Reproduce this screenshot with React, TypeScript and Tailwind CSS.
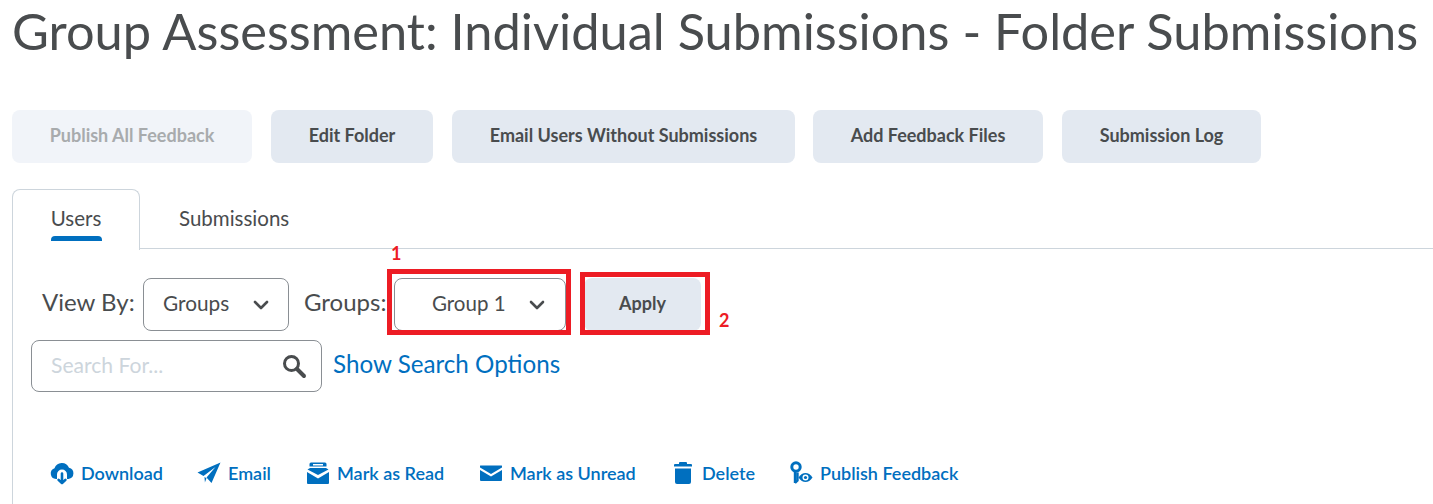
import React from "react";

const Chevron = () => (
  <svg width="16" height="10" viewBox="0 0 16 10" fill="none" stroke="#494c4e" strokeWidth="2.6" strokeLinecap="round" strokeLinejoin="round">
    <path d="M2 2l6 6 6-6" />
  </svg>
);

const blue = "#006fbf";

const IconDownload = () => (
  <svg width="24" height="24" viewBox="0 0 24 24">
    <path fill={blue} d="M6 18a5.500 5.500 0 0 1-1.500-10.700A7.800 7.800 0 0 1 19 6.800 5.700 5.700 0 0 1 18.500 18z" />
    <circle cx="12" cy="13.500" r="5" fill="#fff" />
    <rect x="7" y="13.500" width="10" height="5" fill="#fff" />
    <path fill="none" stroke={blue} strokeWidth="2.600" strokeLinecap="round" strokeLinejoin="round" d="M12 12.500v9.500M8.600 18.800l3.400 3.400 3.400-3.400" />
  </svg>
);
const IconEmail = () => (
  <svg width="24" height="24" viewBox="0 0 24 24">
    <path fill={blue} d="M23.500 1.500 0.500 11.500l6 3.600L18.500 6 9.500 16.600l5 5.400z" />
    <path fill={blue} d="M7.500 16l2 1.200-1.600 4.200z" />
  </svg>
);
const IconRead = () => (
  <svg width="24" height="24" viewBox="0 0 24 24">
    <path fill={blue} d="M5 1.500h14a1.500 1.500 0 0 1 1.500 1.500v2.500H3.500V3A1.500 1.500 0 0 1 5 1.500z" />
    <path fill={blue} d="M1.500 8.500 4 7h16l2.500 1.500L12 14z" />
    <path fill={blue} d="M1 11l11 6.500L23 11v11a1 1 0 0 1-1 1H2a1 1 0 0 1-1-1z" />
    <rect x="7" y="3" width="10" height="1.500" fill="#fff" />
  </svg>
);
const IconUnread = () => (
  <svg width="24" height="24" viewBox="0 0 24 24">
    <path fill={blue} d="M1.500 4.500h21a1 1 0 0 1 .5.200v1.800L12 13 1 6.500V4.700a1 1 0 0 1 .5-.2z" />
    <path fill={blue} d="M1 9l11 6.500L23 9v10a1 1 0 0 1-1 1H2a1 1 0 0 1-1-1z" />
  </svg>
);
const IconDelete = () => (
  <svg width="24" height="24" viewBox="0 0 24 24">
    <path fill={blue} d="M9 1h6a1 1 0 0 1 1 1v1h4a1 1 0 0 1 1 1v1.500H3V4a1 1 0 0 1 1-1h4V2a1 1 0 0 1 1-1z" />
    <path fill={blue} d="M4 7.500h16V21a2 2 0 0 1-2 2H6a2 2 0 0 1-2-2z" />
  </svg>
);
const IconPublish = () => (
  <svg width="24" height="24" viewBox="0 0 24 24">
    <circle cx="7" cy="6" r="4.200" fill="none" stroke={blue} strokeWidth="3" />
    <path fill="none" stroke={blue} strokeWidth="2.400" d="M6 10.500V22M6 22l2.500-2.500v-8" />
    <path fill={blue} d="M9.500 16.500c2-3.300 4.500-4.500 7-4.500s5 1.200 7 4.500c-2 3.300-4.500 4.500-7 4.500s-5-1.200-7-4.500z" />
    <circle cx="16.500" cy="16.500" r="3" fill="#fff" />
    <circle cx="16.500" cy="16.500" r="1.600" fill={blue} />
  </svg>
);

const btn = "h-[53px] rounded-lg bg-[#e3e9f1] text-[18px] font-bold text-[#494c4e] flex items-center justify-center pb-[2px]";

const Action = ({ icon, label, w }: { icon: React.ReactNode; label: string; w: string }) => (
  <div className={`flex items-center gap-[7px] text-[18px] font-semibold text-[#006fbf] ${w}`}>
    {icon}
    <span>{label}</span>
  </div>
);

export default function App() {
  return (
    <div className="relative w-[1433px] h-[504px] overflow-hidden bg-white pl-3 font-['Lato','Liberation_Sans',sans-serif] text-[#494c4e]">
      <h1 className="h-[110px] pt-[2px] text-[50.560px] leading-[58px] font-normal whitespace-nowrap">
        Group Assessment: Individual Submissions - Folder Submissions
      </h1>

      <div className="flex gap-[19px]">
        <div className={`${btn} w-[240px] bg-[#f1f4f9] text-[#a8abad]`}>Publish All Feedback</div>
        <div className={`${btn} w-[162px]`}>Edit Folder</div>
        <div className={`${btn} w-[343px]`}>Email Users Without Submissions</div>
        <div className={`${btn} w-[230px] ml-[-1px]`}>Add Feedback Files</div>
        <div className={`${btn} w-[199px]`}>Submission Log</div>
      </div>

      <div className="mt-[26px] flex h-[60px]">
        <div className="w-[128px] h-[61px] rounded-t-lg border border-b-0 border-[#cdd5dc] bg-white flex justify-center relative z-10">
          <div className="relative h-[59px] w-[51px] flex justify-center pt-[16px] text-[20.500px] leading-[24px]">
            Users
            <div className="absolute left-0 bottom-[8px] w-[51px] h-[5px] rounded-t-[4px] bg-[#006fbf]" />
          </div>
        </div>
        <div className="flex-1 border-b border-[#cdd5dc] pl-[39px] pt-[17px] text-[20.500px] leading-[24px]">Submissions</div>
      </div>

      <div className="border-l border-[#cdd5dc] h-[255px] pl-[18px] pt-[29px]">
        <div className="flex items-center h-[53px] text-[24px]">
          <span className="ml-[11px] w-[101px] -mt-[5px]">View By:</span>
          <div className="w-[146px] h-[53px] rounded-lg border border-[#8a8f94] flex items-center justify-between pl-[19px] pr-[19px] text-[20.800px]">
            <span className="-mt-[3px]">Groups</span>
            <Chevron />
          </div>
          <span className="ml-[15px] w-[90px] -mt-[5px]">Groups:</span>
          <div className="w-[172px] h-[53px] rounded-lg border border-[#8a8f94] flex items-center justify-between pl-[37px] pr-[20px] text-[20.500px]">
            <span className="-mt-[3px]">Group 1</span>
            <Chevron />
          </div>
          <div className="ml-[18px] w-[117px] h-[53px] rounded-lg bg-[#e3e9f1] font-bold text-[18px] flex items-center justify-center pb-[2px]">Apply</div>
        </div>
        <div className="flex items-center h-[52px] mt-[9px]">
          <div className="w-[291px] h-[52px] rounded-lg border border-[#8a8f94] flex items-center justify-between pl-[19px] pr-[14px] text-[21.100px] text-[#cdd5dc]">
            <span className="-mt-[3px]">Search For...</span>
            <svg width="26" height="26" viewBox="0 0 26 26" fill="none" stroke="#494c4e">
              <circle cx="10.500" cy="10.500" r="7" strokeWidth="3" />
              <path d="M16 16l7 7" strokeWidth="4" strokeLinecap="round" />
            </svg>
          </div>
          <span className="ml-[11px] text-[24.200px] text-[#006fbf] -mt-[4px]">Show Search Options</span>
        </div>
        <div className="flex items-center h-[24px] mt-[69px] ml-[19px]">
          <Action icon={<IconDownload />} label="Download" w="w-[147px]" />
          <Action icon={<IconEmail />} label="Email" w="w-[109px]" />
          <Action icon={<IconRead />} label="Mark as Read" w="w-[173px]" />
          <Action icon={<IconUnread />} label="Mark as Unread" w="w-[192px]" />
          <Action icon={<IconDelete />} label="Delete" w="w-[118px]" />
          <Action icon={<IconPublish />} label="Publish Feedback" w="w-[200px]" />
        </div>
      </div>

      <span className="absolute left-[391px] top-[243px] text-[18px] leading-[20px] font-bold text-[#ed1c24]">1</span>
      <span className="absolute left-[719px] top-[310px] text-[18px] leading-[20px] font-bold text-[#ed1c24]">2</span>
      <div className="absolute left-[387px] top-[269px] w-[184px] h-[66px] border-[5px] border-[#ed1c24]" />
      <div className="absolute left-[580px] top-[272px] w-[130px] h-[63px] border-[5px] border-[#ed1c24]" />
    </div>
  );
}
